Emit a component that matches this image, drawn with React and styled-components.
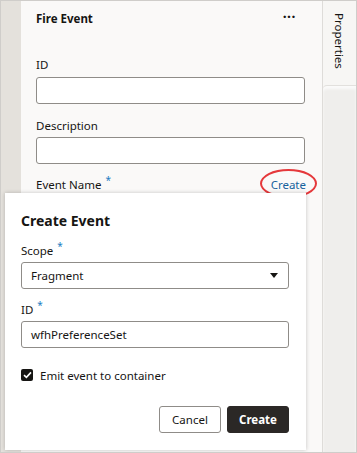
import styled, { createGlobalStyle } from "styled-components";

const GlobalStyle = createGlobalStyle`
  html, body {
    margin: 0;
    padding: 0;
    background: #ffffff;
  }
  body {
    font-family: "Noto Sans", "Liberation Sans", sans-serif;
    color: #161513;
  }
  * { box-sizing: border-box; }
`;

// Whole frame
const Frame = styled.div`
  position: relative;
  width: 357px;
  height: 453px;
  border: 1px solid #cfcdca;
  display: flex;
  overflow: hidden;
`;

const LeftStrip = styled.div`
  width: 20px;
  background-color: #e4e1dc;
`;

const Panel = styled.div`
  width: 301px;
  background-color: #faf9f8;
  padding: 9px 16px 0 15px;
  display: flex;
  flex-direction: column;
`;

const PanelHeader = styled.div`
  display: flex;
  justify-content: space-between;
  align-items: center;
  height: 16px;
  margin-bottom: 30px;
`;

const Title = styled.h3`
  margin: 0;
  font-size: 11.5px;
  font-weight: 700;
`;

const Dots = styled.span`
  font-size: 14px;
  font-weight: 700;
  letter-spacing: 0.5px;
  line-height: 1;
  margin-right: 10px;
  margin-top: -3px;
`;

const Field = styled.div`
  display: flex;
  flex-direction: column;
  margin-bottom: ${({ $gap }) => $gap || 12}px;
`;

const LabelRow = styled.div`
  display: flex;
  justify-content: space-between;
  align-items: flex-end;
  height: 16px;
  margin-bottom: ${({ $gap }) => $gap ?? 4}px;
`;

const Label = styled.label`
  font-size: 11.5px;
  color: #161513;
`;

const Req = styled.sup`
  color: #227cc2;
  font-size: 10px;
  margin-left: 4px;
  vertical-align: 5px;
  line-height: 0;
`;

const TextBox = styled.div`
  height: 27px;
  width: ${({ $w }) => $w || 269}px;
  background: #ffffff;
  border: 1px solid #8f8c88;
  border-radius: 3px;
  display: flex;
  align-items: center;
  justify-content: space-between;
  padding: 0 10px 0 9px;
  font-size: 11.5px;
  color: #161513;
`;

const LinkWrap = styled.span`
  position: relative;
  font-size: 11.5px;
  color: #17629c;
`;

const Ring = styled.span`
  position: absolute;
  left: -11px;
  top: -8px;
  width: 57px;
  height: 29px;
  border: 2px solid #e5383b;
  border-radius: 50%;
`;

// Right side rail with vertical tab
const Rail = styled.div`
  flex: 1;
  display: flex;
  flex-direction: column;
  border-left: 1px solid #dedcd9;
  background: #f7f6f4;
`;

const Tab = styled.div`
  height: 84px;
  display: flex;
  justify-content: center;
  padding-top: 12px;
`;

const TabText = styled.span`
  writing-mode: vertical-rl;
  font-size: 11.5px;
  color: #161513;
`;

const RailBody = styled.div`
  flex: 1;
  background: #efeeec;
  border-top: 1px solid #e2e0dd;
  border-top-left-radius: 4px;
  box-shadow: inset 0 3px 3px rgba(255, 255, 255, 0.7);
`;

// Popover dialog
const Popover = styled.div`
  position: absolute;
  left: 4px;
  top: 192px;
  width: 301px;
  height: 257px;
  background: #ffffff;
  box-shadow: 0 0 4px rgba(0, 0, 0, 0.22);
  padding: 18px 16px 0 16px;
  display: flex;
  flex-direction: column;
`;

const PopTitle = styled.h2`
  margin: 0 0 11px;
  font-size: 14px;
  font-weight: 700;
  line-height: 20px;
`;

const Caret = styled.span`
  width: 0;
  height: 0;
  border-left: 4px solid transparent;
  border-right: 4px solid transparent;
  border-top: 5px solid #161513;
`;

const CheckRow = styled.div`
  display: flex;
  align-items: center;
  gap: 7px;
  height: 16px;
  font-size: 11.5px;
  margin-top: 7px;
`;

const CheckBox = styled.span`
  width: 12px;
  height: 12px;
  border-radius: 2px;
  background: #161513;
  display: flex;
  align-items: center;
  justify-content: center;
`;

const Actions = styled.div`
  display: flex;
  justify-content: flex-end;
  gap: 6px;
  margin-top: 23px;
  width: 268px;
`;

const Button = styled.button`
  height: 27px;
  width: 62px;
  border-radius: 3px;
  font-family: inherit;
  font-size: 11.5px;
  font-weight: ${({ $primary }) => ($primary ? 700 : 400)};
  color: ${({ $primary }) => ($primary ? "#ffffff" : "#161513")};
  background: ${({ $primary }) => ($primary ? "#2b2826" : "#ffffff")};
  border: 1px solid ${({ $primary }) => ($primary ? "#2b2826" : "#8f8c88")};
  padding: 0;
`;

export default function App() {
  return (
    <>
      <GlobalStyle />
      <Frame>
        <LeftStrip />
        <Panel>
          <PanelHeader>
            <Title>Fire Event</Title>
            <Dots>···</Dots>
          </PanelHeader>
          <Field $gap={13}>
            <LabelRow $gap={5}>
              <Label>ID</Label>
            </LabelRow>
            <TextBox />
          </Field>
          <Field $gap={12}>
            <LabelRow>
              <Label>Description</Label>
            </LabelRow>
            <TextBox />
          </Field>
          <Field>
            <LabelRow>
              <Label>
                Event Name<Req>*</Req>
              </Label>
              <LinkWrap>
                Create
                <Ring />
              </LinkWrap>
            </LabelRow>
          </Field>
        </Panel>
        <Rail>
          <Tab>
            <TabText>Properties</TabText>
          </Tab>
          <RailBody />
        </Rail>

        <Popover>
          <PopTitle>Create Event</PopTitle>
          <Field $gap={12}>
            <LabelRow $gap={4}>
              <Label>
                Scope<Req>*</Req>
              </Label>
            </LabelRow>
            <TextBox $w={268}>
              Fragment
              <Caret />
            </TextBox>
          </Field>
          <Field $gap={12}>
            <LabelRow>
              <Label>
                ID<Req>*</Req>
              </Label>
            </LabelRow>
            <TextBox $w={268}>wfhPreferenceSet</TextBox>
          </Field>
          <CheckRow>
            <CheckBox>
              <svg width="9" height="8" viewBox="0 0 9 8">
                <path d="M1 4.2 L3.4 6.4 L8 1.4" fill="none" stroke="#fff" strokeWidth="1.6" />
              </svg>
            </CheckBox>
            Emit event to container
          </CheckRow>
          <Actions>
            <Button>Cancel</Button>
            <Button $primary>Create</Button>
          </Actions>
        </Popover>
      </Frame>
    </>
  );
}
